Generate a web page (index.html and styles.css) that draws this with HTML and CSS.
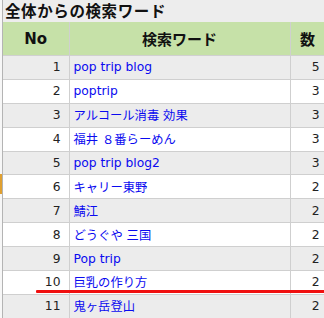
FILE: index.html
```html
<!DOCTYPE html>
<html lang="ja">
<head>
<meta charset="utf-8">
<link rel="stylesheet" href="styles.css">
</head>
<body>
<div class="frame">
  <h2 class="title">全体からの検索ワード</h2>
  <table class="rank">
    <colgroup><col class="c-no"><col class="c-word"><col class="c-count"></colgroup>
    <thead>
      <tr><th>No</th><th>検索ワード</th><th>数</th></tr>
    </thead>
    <tbody>
      <tr class="odd"><td class="no">1</td><td class="word">pop trip blog</td><td class="cnt">5</td></tr>
      <tr><td class="no">2</td><td class="word">poptrip</td><td class="cnt">3</td></tr>
      <tr class="odd"><td class="no">3</td><td class="word">アルコール消毒 効果</td><td class="cnt">3</td></tr>
      <tr><td class="no">4</td><td class="word">福井 ８番らーめん</td><td class="cnt">3</td></tr>
      <tr class="odd"><td class="no">5</td><td class="word">pop trip blog2</td><td class="cnt">3</td></tr>
      <tr><td class="no">6</td><td class="word">キャリー東野</td><td class="cnt">2</td></tr>
      <tr class="odd"><td class="no">7</td><td class="word">鯖江</td><td class="cnt">2</td></tr>
      <tr><td class="no">8</td><td class="word">どうぐや 三国</td><td class="cnt">2</td></tr>
      <tr class="odd"><td class="no">9</td><td class="word">Pop trip</td><td class="cnt">2</td></tr>
      <tr><td class="no">10</td><td class="word">巨乳の作り方</td><td class="cnt">2</td></tr>
      <tr class="odd"><td class="no">11</td><td class="word">鬼ヶ岳登山</td><td class="cnt">2</td></tr>
    </tbody>
  </table>
  <div class="marker"></div>
  <div class="redline"></div>
</div>
</body>
</html>
```

FILE: styles.css
```css
html, body {
  margin: 0;
  padding: 0;
  background: #f7f7f7;
}
.frame {
  position: relative;
  width: 324px;
  height: 318px;
  overflow: hidden;
  padding-left: 2px;
  box-sizing: border-box;
}
.frame::before {
  content: "";
  position: absolute;
  left: 2px;
  top: 0;
  bottom: 0;
  width: 1px;
  background: #b4b4b4;
}
.title {
  margin: 0 0 0 1px;
  height: 22px;
  padding-left: 2px;
  background: #ededed;
  font: bold 15.5px/21px "Noto Sans CJK JP", sans-serif;
  letter-spacing: 0.6px;
  color: #111;
}
.rank {
  margin-left: 1px;
  width: 322px;
  border-collapse: collapse;
  table-layout: fixed;
  font-family: "DejaVu Sans", "Noto Sans CJK JP", sans-serif;
  font-size: 12.3px;
}
.c-no { width: 66px; }
.c-word { width: 221px; }
.c-count { width: 35px; }
.rank th {
  height: 33px;
  padding: 0;
  background: #c6e1a8;
  border-left: 1px solid #cfcfcf;
  border-right: 1px solid #cfcfcf;
  border-bottom: 1px solid #d0d0d0;
  font: bold 15px "DejaVu Sans", "Noto Sans CJK JP", sans-serif;
  color: #111;
  text-align: center;
}
.rank th:first-child { border-left: none; }
.rank td {
  height: 22.9px;
  padding: 0;
  border: 1px solid #cfcfcf;
  background: #ffffff;
  white-space: nowrap;
}
.rank td:first-child { border-left: none; }
.rank tr.odd td { background: #ececec; }
.no {
  text-align: right;
  padding-right: 8px !important;
  color: #222;
}
.word {
  padding-left: 4px !important;
  color: #0a0af0;
}
.cnt {
  text-align: right;
  padding-right: 5px !important;
  color: #222;
}
.marker {
  position: absolute;
  left: 0;
  top: 174px;
  width: 2px;
  height: 20px;
  background: #e0a030;
}
.redline {
  position: absolute;
  left: 36px;
  top: 289.5px;
  width: 290px;
  height: 3px;
  background: #f01010;
  border-radius: 1px;
}
```
